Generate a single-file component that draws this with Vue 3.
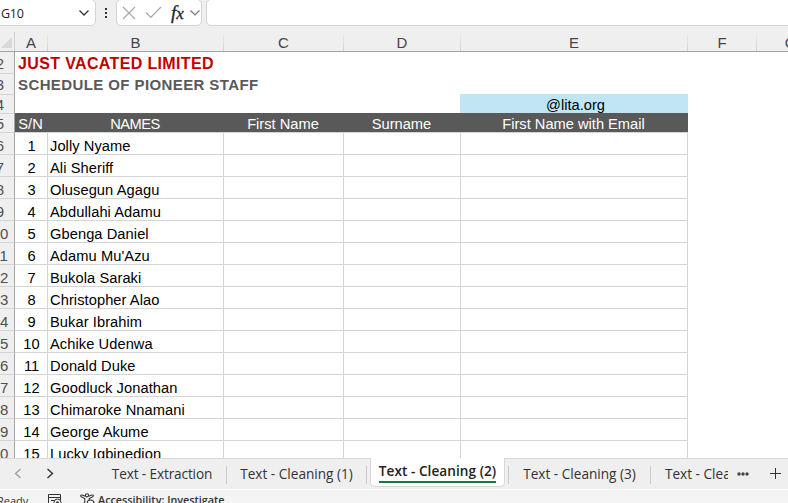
<script setup>
const columns = ['A', 'B', 'C', 'D', 'E', 'F', 'G']
const names = [
  'Jolly Nyame', 'Ali Sheriff', 'Olusegun Agagu', 'Abdullahi Adamu', 'Gbenga Daniel',
  "Adamu Mu'Azu", 'Bukola Saraki', 'Christopher Alao', 'Bukar Ibrahim', 'Achike Udenwa',
  'Donald Duke', 'Goodluck Jonathan', 'Chimaroke Nnamani', 'George Akume', 'Lucky Igbinedion',
]
</script>

<template>
  <div class="app">
    <header class="formula-bar">
      <div class="name-box">
        <span>G10</span>
        <svg width="12" height="8" viewBox="0 0 12 8"><path d="M1.5 1.5 6 6l4.500-4.500" fill="none" stroke="#333" stroke-width="1.300" /></svg>
      </div>
      <svg class="grip" width="4" height="12" viewBox="0 0 4 12"><path d="M1 1h2v2H1zM1 5h2v2H1zM1 9h2v2H1z" fill="#333" /></svg>
      <div class="fx-box">
        <svg class="cancel" width="14" height="14" viewBox="0 0 14 14"><path d="M1 1l12 12M13 1 1 13" fill="none" stroke="#a6a6a6" stroke-width="1.100" /></svg>
        <svg class="accept" width="17" height="13" viewBox="0 0 17 13"><path d="M1 6.500 5.800 11.500 16 1" fill="none" stroke="#a6a6a6" stroke-width="1.200" /></svg>
        <span class="fx"><i>f</i><i class="x">x</i></span>
        <svg class="drop" width="12" height="8" viewBox="0 0 12 8"><path d="M1.500 1.500 6 6l4.500-4.500" fill="none" stroke="#777" stroke-width="1.200" /></svg>
      </div>
      <div class="input"></div>
    </header>

    <main class="sheet">
      <div class="row heads">
        <div class="corner"><svg width="11" height="11" viewBox="0 0 11 11"><path d="M11 0v11H0z" fill="#d9d9d9" /></svg></div>
        <div v-for="c in columns" :key="c" class="head">{{ c }}</div>
      </div>
      <div class="row r2"><div class="num"><span>2</span></div><div class="title red">JUST VACATED LIMITED</div></div>
      <div class="row r3"><div class="num"><span>3</span></div><div class="title gray">SCHEDULE OF PIONEER STAFF</div></div>
      <div class="row r4"><div class="num"><span>4</span></div><div class="domain">@lita.org</div></div>
      <div class="row r5">
        <div class="num"><span>5</span></div>
        <div class="th">S/N</div><div class="th names">NAMES</div><div class="th">First Name</div><div class="th">Surname</div><div class="th">First Name with Email</div>
      </div>
      <div v-for="(name, i) in names" :key="name" class="row data">
        <div class="num"><span>{{ i + 6 }}</span></div>
        <div class="cell sn">{{ i + 1 }}</div>
        <div class="cell name">{{ name }}</div>
        <div class="cell"></div><div class="cell"></div><div class="cell"></div>
      </div>
    </main>

    <nav class="tabs">
      <svg class="prev" width="8" height="11" viewBox="0 0 8 11"><path d="M6.500 1 1.500 5.500l5 4.500" fill="none" stroke="#999" stroke-width="1.200" /></svg>
      <svg class="next" width="8" height="11" viewBox="0 0 8 11"><path d="M1.500 1l5 4.500-5 4.500" fill="none" stroke="#333" stroke-width="1.400" /></svg>
      <div class="tab t1"><span>Text - Extraction</span></div>
      <div class="tab t2"><span>Text - Cleaning (1)</span></div>
      <div class="tab active"><span>Text - Cleaning (2)</span></div>
      <div class="tab t3"><span>Text - Cleaning (3)</span></div>
      <div class="tab t4"><span>Text - Cleaning (4)</span></div>
      <svg class="more" width="12" height="4" viewBox="0 0 12 4"><g fill="#444"><circle cx="2" cy="2" r="1.700" /><circle cx="6" cy="2" r="1.700" /><circle cx="10" cy="2" r="1.700" /></g></svg>
      <svg class="plus" width="11" height="11" viewBox="0 0 11 11"><path d="M5.500 0v11M0 5.500h11" stroke="#333" fill="none" /></svg>
    </nav>

    <footer class="status">
      <span class="ready">Ready</span>
      <svg class="macro" width="15" height="14" viewBox="0 0 15 14"><path d="M7 12.500H1.500V.5h12v6M1.500 3.500h12M4 6.500h4M4 9.500h2" fill="none" stroke="#333" /><circle cx="10.500" cy="8.500" r="3.500" fill="#f4f4f4" stroke="#333" /><circle cx="10.500" cy="8.500" r="1.300" fill="#333" /></svg>
      <svg class="access" width="15" height="15" viewBox="0 0 15 15"><g fill="none" stroke="#333" stroke-width="1.100"><circle cx="7" cy="2.300" r="1.600" /><path d="M5.400 3.300 2.200 2Q.6 1.700.7 3q0 .6 1 1L4.800 5.500v3l-1.600 4.400q0 1.200 1 1.200M8.600 3.300 11.800 2q1.600-.3 1.500 1 0 .6-1 1L9.200 5.500v1.700" /><circle cx="10.500" cy="10.500" r="3.500" /></g></svg>
      <b>Accessibility: Investigate</b>
    </footer>
  </div>
</template>

<style>
body { margin: 0; overflow: hidden; }
</style>

<style scoped>
* { box-sizing: border-box; }
svg { display: block; flex: none; }
.app { width: 788px; height: 503px; display: flex; flex-direction: column; overflow: hidden; background: #efefef; font-family: "Liberation Sans", Arial, sans-serif; color: #000; }
.formula-bar { height: 32px; flex: none; display: flex; }
.name-box { width: 97px; height: 27px; margin: -1px 0 0 -1px; background: #fff; border: 1px solid #d4d4d4; border-radius: 0 5px 5px 0; display: flex; align-items: center; justify-content: space-between; padding: 1px 5px 0 1px; font: 12.5px "Open Sans", sans-serif; color: #222; }
.name-box span { letter-spacing: -0.3px; padding-top: 1px; }
.grip { margin: 7px 0 0 8px; }
.fx-box { width: 86px; height: 27px; margin: -1px 0 0 8px; background: #fff; border: 1px solid #d4d4d4; border-radius: 5px; display: flex; align-items: center; }
.cancel { margin-left: 5px; }
.accept { margin-left: 9px; }
.fx { margin-left: 9px; width: 17px; height: 24px; line-height: 23px; font-family: "Liberation Serif", serif; font-size: 19px; color: #222; white-space: nowrap; -webkit-text-stroke: 0.3px #222; }
.fx .x { font-size: 17px; }
.drop { margin-left: 1px; }
.input { flex: 1; height: 27px; margin: -1px -8px 0 4px; background: #fff; border: 1px solid #d4d4d4; border-radius: 5px; }

.sheet { height: 426px; flex: none; overflow: hidden; background: #fff; }
.row { display: grid; grid-template-columns: 15px 33px 176px 120px 117px 227px 69px 68px; grid-template-rows: 100%; font-size: 14.67px; white-space: nowrap; }
.heads { height: 20px; background: #efefef; border-bottom: 1px solid #a3a3a3; color: #444; font-size: 15px; }
.corner { border-right: 1px solid #cfcfcf; padding: 5px 0 0 1px; }
.head { text-align: center; line-height: 22px; border-right: 1px solid; border-image: linear-gradient(#efefef, #cfcfcf) 1; }
.num { background: #efefef; border-right: 1px solid #a3a3a3; border-bottom: 1px solid #d4d4d4; color: #505050; font-size: 15px; }
.num span { display: block; width: 30px; margin-left: -15px; text-align: center; line-height: 23px; }
.r2 { height: 22px; }
.r3 { height: 21px; }
.r4, .r5 { height: 19px; }
.r3 .num span { line-height: 22px; }
.r4 .num span, .r5 .num span { line-height: 20px; }
.title { grid-column: 2 / 7; padding-left: 3px; font-weight: bold; line-height: 22px; }
.red { color: #c00000; font-size: 16px; line-height: 23px; letter-spacing: 0.36px; }
.gray { color: #595959; font-size: 15px; line-height: 22px; letter-spacing: 0.4px; }
.domain { grid-column: 6; margin: -1px 0 0 -1px; background: #c0e6f5; text-align: center; line-height: 22px; padding-left: 3px; }
.th { margin-top: -1px; background: #595959; color: #fff; text-align: center; line-height: 22px; border-bottom: 1px solid #d4d4d4; padding-right: 2px; }
.names { letter-spacing: -0.5px; }
.data { height: 22px; }
.data .num span { line-height: 26px; }
.cell { border-right: 1px solid #d4d4d4; border-bottom: 1px solid #d4d4d4; line-height: 27px; }
.sn { text-align: center; padding-left: 1px; }
.name { padding-left: 2px; letter-spacing: 0.07px; }

.tabs { height: 32px; flex: none; display: flex; border-top: 1px solid #d8d8d8; border-bottom: 1px solid #fff; font: 13.6px "Open Sans", sans-serif; color: #333; white-space: nowrap; }
.prev { margin: 9px 0 0 14px; }
.next { margin: 9px 0 0 24px; }
.tab { height: 18px; margin-top: 7px; border-right: 1px solid #cacaca; line-height: 16px; display: flex; justify-content: center; }
.t1 { width: 132px; margin-left: 41px; padding: 0 14px 0 17px; letter-spacing: -0.12px; }
.t2 { width: 140px; }
.tab.active { width: 135px; height: 29px; margin: -1px 0 0 3px; background: #fff; border: 1px solid #d8d8d8; border-top: 0; border-radius: 0 0 5px 5px; font-weight: 600; color: #222; align-items: flex-start; letter-spacing: 0.05px; }
.active span { height: 21px; margin-top: 4px; line-height: 18px; border-bottom: 2px solid #107c41; }
.t3 { width: 143px; margin-left: 3px; border-left: 1px solid #cacaca; }
.t4 { width: 77px; border: 0; padding-left: 14px; overflow: hidden; justify-content: flex-start; }
.more { margin: 13px 0 0 9px; }
.plus { margin: 9px 0 0 21px; }

.status { height: 13px; flex: none; overflow: hidden; background: #f4f4f4; display: flex; font: 11px/16px "Open Sans", sans-serif; color: #333; white-space: nowrap; }
.ready { width: 31px; margin: 3px 0 0 -3px; }
.macro { margin: 4px 0 0 19px; }
.access { margin: 3px 0 0 18px; }
.status b { font-weight: 600; font-size: 10.8px; margin: 2px 0 0 3px; }
</style>
